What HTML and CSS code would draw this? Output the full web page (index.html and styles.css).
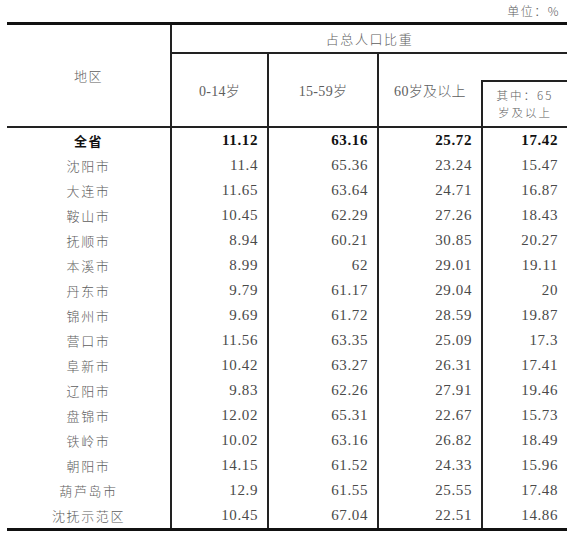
FILE: index.html
```html
<!DOCTYPE html>
<html lang="zh">
<head>
<meta charset="utf-8">
<title>占总人口比重</title>
<link rel="stylesheet" href="styles.css">
</head>
<body>
<div class="page">
  <div class="unit">单位：%</div>
  <table class="stats">
    <colgroup>
      <col class="c-region">
      <col class="c-a">
      <col class="c-b">
      <col class="c-c">
      <col class="c-d">
    </colgroup>
    <thead>
      <tr class="h1">
        <th class="region-h vr" rowspan="3">地区</th>
        <th class="group-h" colspan="4">占总人口比重</th>
      </tr>
      <tr class="h2">
        <th class="vr" rowspan="2">0-14岁</th>
        <th class="vr" rowspan="2">15-59岁</th>
        <th class="sixty" rowspan="2">60岁及以上</th>
        <th class="blank"></th>
      </tr>
      <tr class="h3">
        <th class="sub"><span class="sub-line">其中：65</span><span class="sub-line">岁及以上</span></th>
      </tr>
    </thead>
    <tbody>
      <tr class="total"><td class="name">全省</td><td>11.12</td><td>63.16</td><td>25.72</td><td>17.42</td></tr>
      <tr><td class="name">沈阳市</td><td>11.4</td><td>65.36</td><td>23.24</td><td>15.47</td></tr>
      <tr><td class="name">大连市</td><td>11.65</td><td>63.64</td><td>24.71</td><td>16.87</td></tr>
      <tr><td class="name">鞍山市</td><td>10.45</td><td>62.29</td><td>27.26</td><td>18.43</td></tr>
      <tr><td class="name">抚顺市</td><td>8.94</td><td>60.21</td><td>30.85</td><td>20.27</td></tr>
      <tr><td class="name">本溪市</td><td>8.99</td><td>62</td><td>29.01</td><td>19.11</td></tr>
      <tr><td class="name">丹东市</td><td>9.79</td><td>61.17</td><td>29.04</td><td>20</td></tr>
      <tr><td class="name">锦州市</td><td>9.69</td><td>61.72</td><td>28.59</td><td>19.87</td></tr>
      <tr><td class="name">营口市</td><td>11.56</td><td>63.35</td><td>25.09</td><td>17.3</td></tr>
      <tr><td class="name">阜新市</td><td>10.42</td><td>63.27</td><td>26.31</td><td>17.41</td></tr>
      <tr><td class="name">辽阳市</td><td>9.83</td><td>62.26</td><td>27.91</td><td>19.46</td></tr>
      <tr><td class="name">盘锦市</td><td>12.02</td><td>65.31</td><td>22.67</td><td>15.73</td></tr>
      <tr><td class="name">铁岭市</td><td>10.02</td><td>63.16</td><td>26.82</td><td>18.49</td></tr>
      <tr><td class="name">朝阳市</td><td>14.15</td><td>61.52</td><td>24.33</td><td>15.96</td></tr>
      <tr><td class="name">葫芦岛市</td><td>12.9</td><td>61.55</td><td>25.55</td><td>17.48</td></tr>
      <tr><td class="name">沈抚示范区</td><td>10.45</td><td>67.04</td><td>22.51</td><td>14.86</td></tr>
    </tbody>
  </table>
</div>
</body>
</html>
```

FILE: styles.css
```css
html, body {
  margin: 0;
  padding: 0;
  background: #ffffff;
}

.page {
  width: 577px;
  height: 540px;
  overflow: hidden;
  font-family: "Noto Sans CJK SC", "Liberation Serif", serif;
  color: #5e5e5e;
}

.unit {
  height: 22px;
  line-height: 22px;
  text-align: right;
  padding-right: 17px;
  font-size: 12px;
  font-weight: 300;
  letter-spacing: 1.5px;
  color: #5e5e5e;
}

.stats {
  margin-left: 7px;
  width: 560px;
  table-layout: fixed;
  border-collapse: collapse;
  border-top: 3px solid #111111;
  border-bottom: 3px solid #111111;
}

.c-region { width: 164px; }
.c-a { width: 97px; }
.c-b { width: 110px; }
.c-c { width: 104px; }
.c-d { width: 85px; }

.stats th {
  font-weight: 300;
  font-size: 13px;
  letter-spacing: 1.6px;
  padding: 0;
  text-align: center;
  vertical-align: middle;
  color: #5e5e5e;
}

.h1 { height: 29px; }
.h2 { height: 28px; }
.h3 { height: 46px; }

.vr {
  border-right: 2px solid #222222;
}

.group-h {
  border-bottom: 2px solid #222222;
  letter-spacing: 2.2px;
}

.region-h {
  letter-spacing: 1px;
}

.stats .h2 th {
  font-family: "Liberation Serif", "Noto Sans CJK SC", serif;
  font-size: 14px;
  letter-spacing: 0.3px;
}

.stats .h2 th.sixty {
  border-right: none;
}

.stats .h2 th.blank {
  border: none;
}

.stats .h3 th.sub {
  border-top: 2px solid #222222;
  border-left: 2px solid #222222;
  font-family: "Noto Sans CJK SC", "Liberation Serif", serif;
  font-size: 11.5px;
  letter-spacing: 2px;
  padding-top: 1px;
}

.sub-line {
  display: block;
  height: 17px;
  line-height: 17px;
}

.stats thead {
  border-bottom: 2px solid #222222;
}

.stats td {
  height: 25px;
  padding: 0 9px 0 0;
  text-align: right;
  vertical-align: middle;
  font-family: "Liberation Serif", serif;
  font-size: 15px;
  letter-spacing: 0.6px;
  color: #4a4a4a;
  border-right: 2px solid #222222;
  white-space: nowrap;
}

.stats td:last-child {
  border-right: none;
}

.stats td.name {
  text-align: center;
  padding: 0;
  font-family: "Noto Sans CJK SC", serif;
  font-weight: 300;
  font-size: 13px;
  letter-spacing: 1.6px;
  color: #5e5e5e;
}

.stats tr.total td {
  font-weight: 700;
  color: #111111;
}

.stats tr.total td.name {
  font-weight: 700;
  color: #111111;
}
```
